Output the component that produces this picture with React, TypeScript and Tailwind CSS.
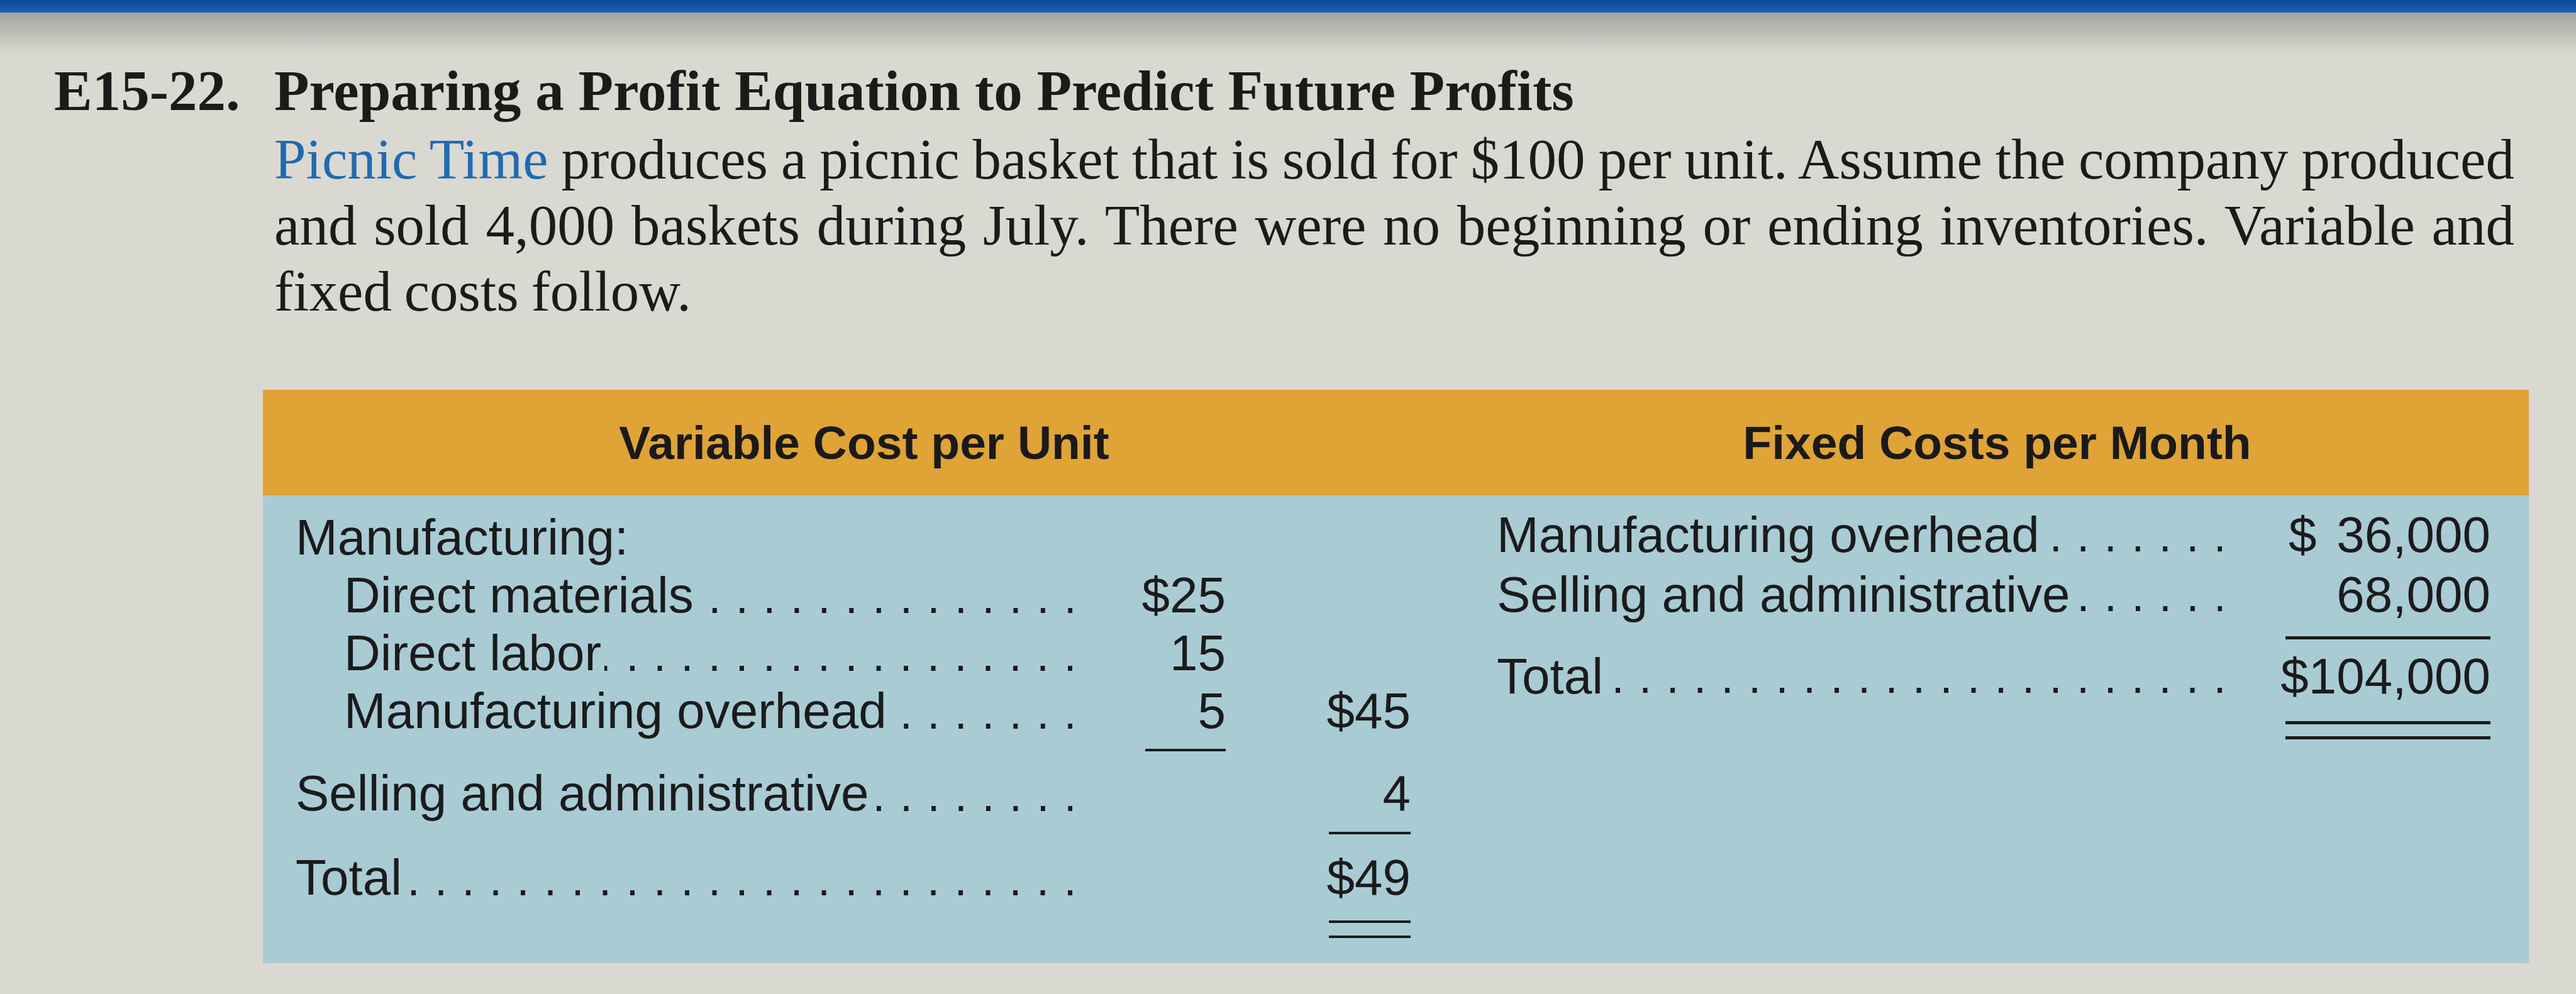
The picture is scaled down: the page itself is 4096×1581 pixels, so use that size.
import React from "react";

function Dots() {
  return (
    <span
      aria-hidden="true"
      className="flex-1 min-w-0 mr-[4px] bg-[linear-gradient(to_right,transparent_calc(100%_-_7px),#1b1b1b_calc(100%_-_7px))] bg-[length:43.5px_8px] bg-[position:right_top_66px] bg-repeat-x"
    />
  );
}

function LeftRow({
  label,
  indent,
  a,
  b,
  className,
}: {
  label: string;
  indent?: boolean;
  a?: string;
  b?: string;
  className?: string;
}) {
  return (
    <div className={"grid grid-cols-[1239px_240px_294px] h-[92px] leading-[92px] " + (className ?? "")}>
      <div className={indent ? "flex min-w-0 pl-[77px]" : "flex min-w-0"}>
        <span className="whitespace-nowrap pr-[5px]">{label}</span>
        {label.endsWith(":") ? null : <Dots />}
      </div>
      <div className="text-right">{a}</div>
      <div className="text-right">{b}</div>
    </div>
  );
}

function RightRow({
  label,
  children,
  className,
}: {
  label: string;
  children?: React.ReactNode;
  className?: string;
}) {
  return (
    <div className={"grid grid-cols-[1157px_423px] h-[95px] leading-[95px] " + (className ?? "")}>
      <div className="flex min-w-0">
        <span className="whitespace-nowrap pr-[5px]">{label}</span>
        <Dots />
      </div>
      <div>{children}</div>
    </div>
  );
}

export default function App() {
  return (
    <div className="w-[4096px] h-[1581px] overflow-hidden bg-[#dbd8d1] text-[#1c1b1a]">
      <div className="h-[20px] bg-linear-to-b from-[#0f4a98] to-[#1c60b6]" />
      <div className="h-[66px] bg-linear-to-b from-[#a5a39e] to-[#dbd8d1]" />

      {/* Exercise text */}
      <div className="flex pl-[86px] pt-[7px] font-['Liberation_Serif','Times_New_Roman',serif]">
        <div className="w-[350px] shrink-0 text-[91px] leading-[104px] font-bold whitespace-nowrap">E15-22.</div>
        <div className="w-[3562px] shrink-0">
          <div className="text-[91px] leading-[104px] font-bold whitespace-nowrap">
            Preparing a Profit Equation to Predict Future Profits
          </div>
          <div className="mt-[4px] text-[91px] leading-[105px] [word-spacing:-3px]">
            <div className="whitespace-nowrap text-justify [text-align-last:justify]">
              <span className="text-[#1d6cb2]">Picnic Time</span> produces a picnic basket that is sold for $100 per unit. Assume the company produced
            </div>
            <div className="whitespace-nowrap text-justify [text-align-last:justify]">
              and sold 4,000 baskets during July. There were no beginning or ending inventories. Variable and
            </div>
            <div className="whitespace-nowrap">fixed costs follow.</div>
          </div>
        </div>
      </div>

      {/* Cost table */}
      <div className="ml-[418px] mt-[104px] w-[3603px] font-['Liberation_Sans',Arial,sans-serif]">
        <div className="grid grid-cols-[1912px_1691px] bg-[#dfa435] py-[42px] text-[75px] leading-[84px] font-bold text-[#1a1a1a]">
          <div className="text-center">Variable Cost per Unit</div>
          <div className="text-center">Fixed Costs per Month</div>
        </div>
        <div className="grid grid-cols-[1912px_1691px] bg-[#a9cbd3] text-[80px] text-[#1b1b1b]">
          {/* Left: variable costs */}
          <div className="pl-[52px] pt-[21px] pb-[40px]">
            <LeftRow label="Manufacturing:" />
            <LeftRow label="Direct materials" indent a="$25" />
            <LeftRow label="Direct labor" indent a="15" />
            <LeftRow label="Manufacturing overhead" indent a="5" b="$45" />
            <div className="grid grid-cols-[1239px_240px_294px] mt-[14px]">
              <div />
              <div className="ml-auto w-[128px] h-[4px] bg-[#1b1b1b]" />
              <div />
            </div>
            <LeftRow label="Selling and administrative" b="4" className="mt-[21px]" />
            <div className="grid grid-cols-[1239px_240px_294px] mt-[15px]">
              <div />
              <div />
              <div className="ml-auto w-[130px] h-[4px] bg-[#1b1b1b]" />
            </div>
            <LeftRow label="Total" b="$49" className="mt-[23px]" />
            <div className="grid grid-cols-[1239px_240px_294px] mt-[22px]">
              <div />
              <div />
              <div className="ml-auto w-[130px] flex flex-col gap-[20px]">
                <div className="h-[4px] bg-[#1b1b1b]" />
                <div className="h-[4px] bg-[#1b1b1b]" />
              </div>
            </div>
          </div>

          {/* Right: fixed costs */}
          <div className="pl-[50px] pr-[61px] pt-[15px]">
            <RightRow label="Manufacturing overhead">
              <div className="ml-[102px] flex justify-between">
                <span>$</span>
                <span>36,000</span>
              </div>
            </RightRow>
            <RightRow label="Selling and administrative">
              <div className="text-right">68,000</div>
            </RightRow>
            <div className="grid grid-cols-[1157px_423px] mt-[19px]">
              <div />
              <div className="ml-auto w-[326px] h-[5px] bg-[#1b1b1b]" />
            </div>
            <RightRow label="Total" className="mt-[11px]">
              <div className="text-right">$104,000</div>
            </RightRow>
            <div className="grid grid-cols-[1157px_423px] mt-[24px]">
              <div />
              <div className="ml-auto w-[326px] flex flex-col gap-[19px]">
                <div className="h-[5px] bg-[#1b1b1b]" />
                <div className="h-[5px] bg-[#1b1b1b]" />
              </div>
            </div>
          </div>
        </div>
      </div>
    </div>
  );
}
